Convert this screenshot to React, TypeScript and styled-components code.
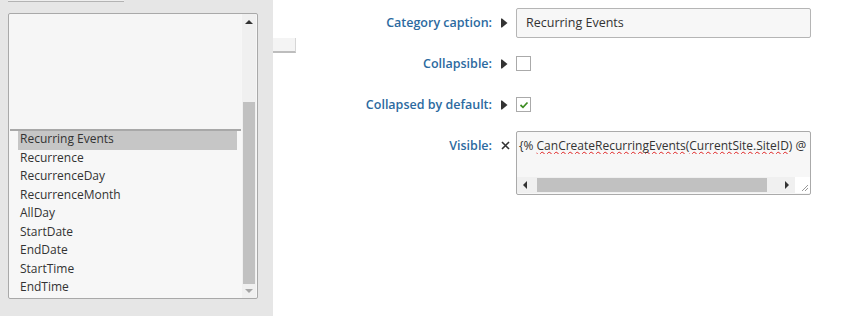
import styled, { createGlobalStyle } from "styled-components";

const fields = [
  "Recurring Events",
  "Recurrence",
  "RecurrenceDay",
  "RecurrenceMonth",
  "AllDay",
  "StartDate",
  "EndDate",
  "StartTime",
  "EndTime",
];

const GlobalStyle = createGlobalStyle`
  html, body {
    margin: 0;
    padding: 0;
    background: #ffffff;
  }
  body {
    font-family: "Open Sans", "Noto Sans", sans-serif;
    font-size: 12px;
    color: #333333;
  }
`;

const Arrow: React.FC = () => (
  <svg width="7" height="10" viewBox="0 0 7 10">
    <rect x="0" y="0.5" width="1" height="9" fill="#333" />
    <polygon points="1,0.5 6.5,5 1,9.5" fill="#333" />
  </svg>
);

const Cross: React.FC = () => (
  <svg width="9" height="9" viewBox="0 0 9 9">
    <path d="M1 1 L8 8 M8 1 L1 8" stroke="#333" strokeWidth="1.6" />
  </svg>
);

const Tick: React.FC = () => (
  <svg width="10" height="8" viewBox="0 0 10 8">
    <path d="M1.5 4 L4 6.3 L8.5 1.5" stroke="#3d8c22" strokeWidth="1.7" fill="none" />
  </svg>
);

const Caret: React.FC<{ dir: "up" | "down" | "left" | "right"; color?: string }> = ({
  dir,
  color = "#333",
}) => {
  const points = {
    up: "0,5 4,1 8,5",
    down: "0,1 4,5 8,1",
    left: "5,0 1,4 5,8",
    right: "1,0 5,4 1,8",
  }[dir];
  const vertical = dir === "up" || dir === "down";
  return (
    <svg
      width={vertical ? 8 : 6}
      height={vertical ? 6 : 8}
      viewBox={vertical ? "0 0 8 6" : "0 0 6 8"}
    >
      <polygon points={points} fill={color} />
    </svg>
  );
};

const App: React.FC = () => {
  return (
    <>
      <GlobalStyle />
      <Page>
        <Sidebar>
          <TopTab />
          <ListBox>
            <ListContent>
              <DragCover />
              {fields.map((f, i) => (
                <Item key={f} $selected={i === 0}>
                  {f}
                </Item>
              ))}
            </ListContent>
            <VScroll>
              <ScrollArrow $size={16}>
                <Caret dir="up" />
              </ScrollArrow>
              <VTrack>
                <VThumb />
              </VTrack>
              <ScrollArrow $size={14}>
                <Caret dir="down" color="#a6a6a6" />
              </ScrollArrow>
            </VScroll>
          </ListBox>
        </Sidebar>
        <SplitHandle />
        <Form>
          <Label>Category caption:</Label>
          <IconCell>
            <Arrow />
          </IconCell>
          <Field>
            <TextInput>Recurring Events</TextInput>
          </Field>

          <Label>Collapsible:</Label>
          <IconCell>
            <Arrow />
          </IconCell>
          <Field>
            <CheckBox />
          </Field>

          <Label>Collapsed by default:</Label>
          <IconCell>
            <Arrow />
          </IconCell>
          <Field>
            <CheckBox>
              <Tick />
            </CheckBox>
          </Field>

          <Label $top>Visible:</Label>
          <IconCell $top>
            <Cross />
          </IconCell>
          <Field $top>
            <Macro>
              <MacroText>
                {"{% "}
                <Misspelled>CanCreateRecurringEvents</Misspelled>(
                <Misspelled>CurrentSite.SiteID</Misspelled>) @
              </MacroText>
              <HScroll>
                <HArrow>
                  <Caret dir="left" />
                </HArrow>
                <HTrack>
                  <HThumb />
                </HTrack>
                <HArrow>
                  <Caret dir="right" />
                </HArrow>
                <Grip>
                  <svg width="8" height="8" viewBox="0 0 8 8">
                    <path d="M7 1 L1 7 M7 4 L4 7" stroke="#999" strokeWidth="1" />
                  </svg>
                </Grip>
              </HScroll>
            </Macro>
          </Field>
        </Form>
      </Page>
    </>
  );
};

const Page = styled.div`
  display: flex;
  height: 316px;
  width: 850px;
  overflow: hidden;
`;

const Sidebar = styled.div`
  width: 273px;
  flex-shrink: 0;
  background: #e6e6e6;
  padding-left: 8px;
  box-sizing: border-box;
  display: flex;
  flex-direction: column;
`;

const TopTab = styled.div`
  width: 116px;
  height: 1px;
  background: #eeeeee;
  border-bottom: 1px solid #b3b3b3;
`;

const ListBox = styled.div`
  margin-top: 11px;
  width: 250px;
  height: 286px;
  box-sizing: border-box;
  border: 1px solid #a9a9a9;
  border-radius: 2px;
  background: #f7f7f7;
  display: flex;
  padding: 0 1px 0 1px;
`;

const ListContent = styled.div`
  flex: 1;
  display: flex;
  flex-direction: column;
  overflow: hidden;
`;

const DragCover = styled.div`
  height: 115px;
  flex-shrink: 0;
  background: #f6f6f6;
  border-bottom: 2px solid #a8a8a8;
  margin-right: 1px;
`;

const Item = styled.div<{ $selected?: boolean }>`
  height: 18.5px;
  line-height: 16px;
  margin: 0 5px 0 8px;
  padding-left: 2px;
  font-size: 12px;
  color: #333333;
  white-space: nowrap;
  background: ${({ $selected }) => ($selected ? "#c6c6c6" : "transparent")};
`;

const VScroll = styled.div`
  width: 14px;
  display: flex;
  flex-direction: column;
  background: #f0f0f0;
`;

const ScrollArrow = styled.div<{ $size: number }>`
  height: ${({ $size }) => $size}px;
  flex-shrink: 0;
  display: flex;
  align-items: center;
  justify-content: center;
`;

const VTrack = styled.div`
  flex: 1;
  display: flex;
  flex-direction: column;
  justify-content: flex-end;
  padding: 0 1px 0 1px;
`;

const VThumb = styled.div`
  height: 182px;
  background: #c1c1c1;
`;

const SplitHandle = styled.div`
  align-self: flex-start;
  margin-top: 38px;
  width: 22px;
  height: 13px;
  background: #f4f4f4;
  border-bottom: 2px solid #bdbdbd;
  border-right: 1px solid #d6d6d6;
  flex-shrink: 0;
`;

const Form = styled.div`
  display: grid;
  grid-template-columns: 196px 24px 295px;
  grid-template-rows: repeat(3, 41px) auto;
  padding-top: 2px;
  align-content: start;
`;

const Label = styled.div<{ $top?: boolean }>`
  display: flex;
  align-items: center;
  justify-content: flex-end;
  align-self: ${({ $top }) => ($top ? "start" : "center")};
  margin-top: ${({ $top }) => ($top ? "6px" : "0")};
  height: ${({ $top }) => ($top ? "28px" : "auto")};
  font-weight: 600;
  font-size: 12.5px;
  color: #2c6aa0;
  white-space: nowrap;
`;

const IconCell = styled.div<{ $top?: boolean }>`
  display: flex;
  align-items: center;
  padding-left: 9px;
  align-self: ${({ $top }) => ($top ? "start" : "center")};
  margin-top: ${({ $top }) => ($top ? "6px" : "0")};
  height: ${({ $top }) => ($top ? "28px" : "auto")};
`;

const Field = styled.div<{ $top?: boolean }>`
  display: flex;
  align-items: center;
  align-self: ${({ $top }) => ($top ? "start" : "center")};
  margin-top: ${({ $top }) => ($top ? "6px" : "0")};
`;

const TextInput = styled.div`
  width: 100%;
  height: 30px;
  box-sizing: border-box;
  border: 1px solid #b5b5b5;
  border-radius: 2px;
  background: #f7f7f7;
  padding-left: 9px;
  display: flex;
  align-items: center;
  font-size: 12.5px;
  color: #333333;
`;

const CheckBox = styled.div`
  width: 15px;
  height: 15px;
  box-sizing: border-box;
  border: 1px solid #aaaaaa;
  background: #ffffff;
  display: flex;
  align-items: center;
  justify-content: center;
`;

const Macro = styled.div`
  width: 295px;
  height: 64px;
  box-sizing: border-box;
  border: 1px solid #aaaaaa;
  border-radius: 2px;
  background: #f7f7f7;
  display: flex;
  flex-direction: column;
  justify-content: space-between;
  overflow: hidden;
`;

const MacroText = styled.div`
  padding: 5px 0 0 2px;
  font-size: 12px;
  color: #333333;
  white-space: nowrap;
  overflow: hidden;
`;

const Misspelled = styled.span`
  text-decoration: underline wavy #e02020;
  text-decoration-thickness: 1px;
  text-underline-offset: 1px;
  text-decoration-skip-ink: none;
`;

const HScroll = styled.div`
  height: 16px;
  display: flex;
  align-items: stretch;
  background: #f0f0f0;
  margin-bottom: 1px;
`;

const HArrow = styled.div`
  width: 16px;
  display: flex;
  align-items: center;
  justify-content: center;
  flex-shrink: 0;
`;

const HTrack = styled.div`
  flex: 1;
  display: flex;
  align-items: stretch;
  padding: 1px 12px 1px 4px;
`;

const HThumb = styled.div`
  flex: 1;
  background: #c1c1c1;
`;

const Grip = styled.div`
  width: 15px;
  flex-shrink: 0;
  background: #ffffff;
  display: flex;
  align-items: flex-end;
  justify-content: flex-end;
  padding: 0 1px 1px 0;
  box-sizing: border-box;
`;

export default App;
